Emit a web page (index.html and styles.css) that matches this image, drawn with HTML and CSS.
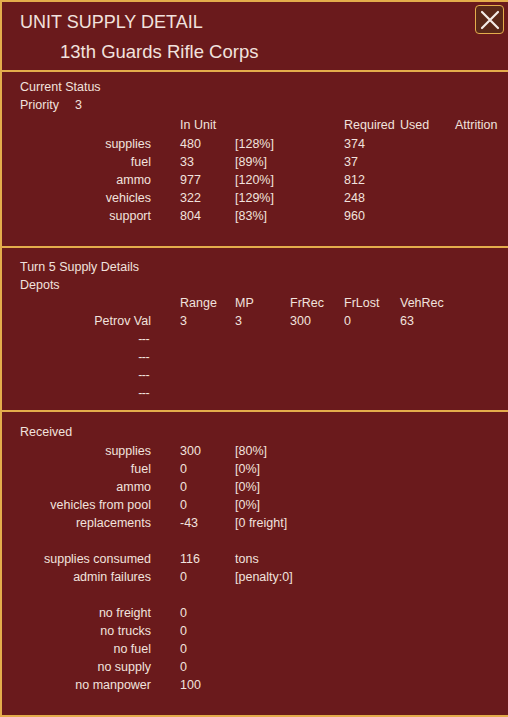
FILE: index.html
```html
<!DOCTYPE html>
<html>
<head>
<meta charset="utf-8">
<link rel="stylesheet" href="styles.css">
</head>
<body>
<div class="panel">
  <header class="head">
    <div class="title">UNIT SUPPLY DETAIL</div>
    <div class="subtitle">13th Guards Rifle Corps</div>
    <button class="close" aria-label="close">
      <svg width="20" height="20" viewBox="0 0 20 20"><path d="M2 2 L18 18 M18 2 L2 18" stroke="#f4ece8" stroke-width="2.2" fill="none" stroke-linecap="round"/></svg>
    </button>
  </header>

  <section class="sec sec1">
    <div class="line">Current Status</div>
    <div class="line">Priority<span class="prio">3</span></div>
    <div class="grid hdr">
      <span></span><span>In Unit</span><span></span><span></span><span>Required</span><span>Used</span><span>Attrition</span>
    </div>
    <div class="grid">
      <span class="lbl">supplies</span><span>480</span><span>[128%]</span><span></span><span>374</span><span></span><span></span>
      <span class="lbl">fuel</span><span>33</span><span>[89%]</span><span></span><span>37</span><span></span><span></span>
      <span class="lbl">ammo</span><span>977</span><span>[120%]</span><span></span><span>812</span><span></span><span></span>
      <span class="lbl">vehicles</span><span>322</span><span>[129%]</span><span></span><span>248</span><span></span><span></span>
      <span class="lbl">support</span><span>804</span><span>[83%]</span><span></span><span>960</span><span></span><span></span>
    </div>
  </section>

  <section class="sec sec2">
    <div class="line">Turn 5 Supply Details</div>
    <div class="line">Depots</div>
    <div class="grid">
      <span></span><span>Range</span><span>MP</span><span>FrRec</span><span>FrLost</span><span>VehRec</span><span></span>
      <span class="lbl">Petrov Val</span><span>3</span><span>3</span><span>300</span><span>0</span><span>63</span><span></span>
      <span class="lbl dash">---</span><span></span><span></span><span></span><span></span><span></span><span></span>
      <span class="lbl dash">---</span><span></span><span></span><span></span><span></span><span></span><span></span>
      <span class="lbl dash">---</span><span></span><span></span><span></span><span></span><span></span><span></span>
      <span class="lbl dash">---</span><span></span><span></span><span></span><span></span><span></span><span></span>
    </div>
  </section>

  <section class="sec sec3">
    <div class="line">Received</div>
    <div class="grid g3">
      <span class="lbl">supplies</span><span>300</span><span>[80%]</span>
      <span class="lbl">fuel</span><span>0</span><span>[0%]</span>
      <span class="lbl">ammo</span><span>0</span><span>[0%]</span>
      <span class="lbl">vehicles from pool</span><span>0</span><span>[0%]</span>
      <span class="lbl">replacements</span><span>-43</span><span>[0 freight]</span>
      <span class="blank"></span><span></span><span></span>
      <span class="lbl">supplies consumed</span><span>116</span><span>tons</span>
      <span class="lbl">admin failures</span><span>0</span><span>[penalty:0]</span>
      <span class="blank"></span><span></span><span></span>
      <span class="lbl">no freight</span><span>0</span><span></span>
      <span class="lbl">no trucks</span><span>0</span><span></span>
      <span class="lbl">no fuel</span><span>0</span><span></span>
      <span class="lbl">no supply</span><span>0</span><span></span>
      <span class="lbl">no manpower</span><span>100</span><span></span>
    </div>
  </section>
</div>
</body>
</html>
```

FILE: styles.css
```css
* { box-sizing: border-box; }
html, body {
  margin: 0;
  padding: 0;
  background: #6a1a1c;
}
body {
  width: 508px;
  height: 717px;
  overflow: hidden;
  font-family: "Liberation Sans", Tahoma, sans-serif;
  font-size: 12.5px;
  color: #f1e2de;
}
.panel {
  width: 510px;
  height: 717px;
  background: #6a1a1c;
  border: 2px solid #e4ad4c;
  border-right: none;
  display: flex;
  flex-direction: column;
}
.head {
  position: relative;
  height: 70px;
  padding: 9px 0 0 18px;
  border-bottom: 2px solid #e4ad4c;
}
.title {
  font-size: 18px;
  line-height: 22px;
}
.subtitle {
  font-size: 18.5px;
  line-height: 22px;
  margin-top: 8px;
  padding-left: 40px;
}
.close {
  position: absolute;
  top: 3px;
  left: 473px;
  width: 29px;
  height: 29px;
  padding: 0;
  border: 1.5px solid #e4ad4c;
  border-radius: 4px;
  background: #5a2819;
  display: flex;
  align-items: center;
  justify-content: center;
}
.sec {
  padding-left: 18px;
  border-bottom: 2px solid #e4ad4c;
}
.sec1 { height: 176px; padding-top: 6px; }
.sec2 { height: 164px; padding-top: 10px; }
.sec3 { flex: 1; padding-top: 11px; border-bottom: none; }
.line { line-height: 18px; height: 18px; }
.prio { margin-left: 16px; }
.grid {
  display: grid;
  grid-template-columns: 178px 55px 55px 54px 56px 55px 55px;
  grid-auto-rows: 18px;
  line-height: 18px;
  margin-left: -18px;
}
.g3 { grid-template-columns: 178px 55px 120px; margin-top: 1px; }
.hdr { margin-top: 2px; margin-bottom: 1px; }
.lbl {
  text-align: right;
  padding-right: 29px;
  white-space: nowrap;
}
.dash { padding-right: 31px; letter-spacing: -0.6px; }
```
